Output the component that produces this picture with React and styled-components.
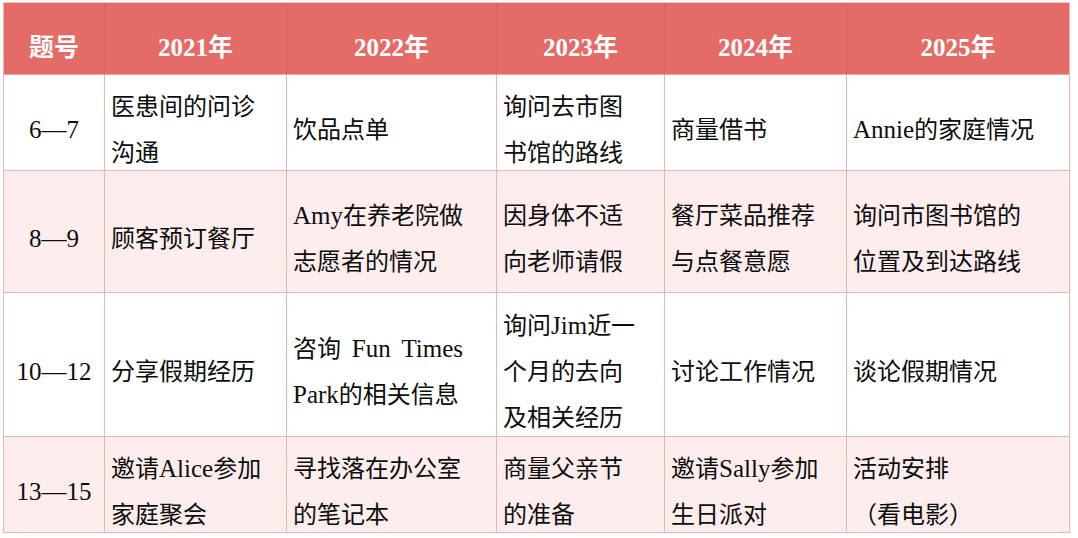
import React from "react";
import styled, { createGlobalStyle } from "styled-components";

const Global = createGlobalStyle`
  html, body { margin: 0; padding: 0; background: #ffffff; }
  body { font-family: "Liberation Serif", "Noto Sans CJK SC", serif; }
`;

const Page = styled.div`
  padding: 2px 0 0 3px;
`;

const Grid = styled.div`
  display: grid;
  grid-template-columns: 101px 182px 210px 168px 182px 223px;
  grid-template-rows: 72px 96px 122px 144px 96px;
  width: max-content;
  border-top: 1px solid #efc4c2;
  border-left: 1px solid #ebb5b5;
`;

const HeadCell = styled.div`
  box-sizing: border-box;
  display: flex;
  align-items: center;
  justify-content: center;
  padding-top: 18px;
  background: #e56b66;
  border-right: 1px solid ${(p) => (p.$last ? "#ebb5b5" : "#d9605b")};
  border-bottom: 1px solid #e8a8a6;
  color: #ffffff;
  font-weight: 700;
  font-size: 25px;
  line-height: 46px;
  white-space: nowrap;
`;

const Cell = styled.div`
  box-sizing: border-box;
  display: flex;
  align-items: center;
  justify-content: ${(p) => (p.$center ? "center" : "flex-start")};
  padding: 15px 0 0 ${(p) => (p.$center ? "0" : "6px")};
  background: ${(p) => (p.$striped ? "#fdeded" : "#ffffff")};
  border-right: 1px solid #ebb5b5;
  border-bottom: 1px solid #ebb5b5;
  color: #0d0d0d;
  font-size: 24px;
  line-height: 46px;
  white-space: nowrap;
`;

const Lines = styled.div`
  display: flex;
  flex-direction: column;
`;

const Line = styled.span`
  display: block;
`;

const SpreadLine = styled.span`
  display: flex;
  justify-content: space-between;
  width: 170px;
`;

const Latin = styled.span`
  font-size: 25px;
`;

const headers = ["题号", "2021年", "2022年", "2023年", "2024年", "2025年"];

const rows = [
  [
    ["6—7"],
    ["医患间的问诊", "沟通"],
    ["饮品点单"],
    ["询问去市图", "书馆的路线"],
    ["商量借书"],
    ["Annie的家庭情况"],
  ],
  [
    ["8—9"],
    ["顾客预订餐厅"],
    ["Amy在养老院做", "志愿者的情况"],
    ["因身体不适", "向老师请假"],
    ["餐厅菜品推荐", "与点餐意愿"],
    ["询问市图书馆的", "位置及到达路线"],
  ],
  [
    ["10—12"],
    ["分享假期经历"],
    [["咨询", "Fun", "Times"], "Park的相关信息"],
    ["询问Jim近一", "个月的去向", "及相关经历"],
    ["讨论工作情况"],
    ["谈论假期情况"],
  ],
  [
    ["13—15"],
    ["邀请Alice参加", "家庭聚会"],
    ["寻找落在办公室", "的笔记本"],
    ["商量父亲节", "的准备"],
    ["邀请Sally参加", "生日派对"],
    ["活动安排", "（看电影）"],
  ],
];

function Runs({ text }) {
  const parts = text.split(/([A-Za-z0-9—]+)/).filter(Boolean);
  return parts.map((p, i) =>
    /^[A-Za-z0-9—]+$/.test(p) ? <Latin key={i}>{p}</Latin> : <React.Fragment key={i}>{p}</React.Fragment>
  );
}

export default function App() {
  return (
    <>
      <Global />
      <Page>
        <Grid>
          {headers.map((h, i) => (
            <HeadCell key={h} $last={i === headers.length - 1}>
              {h}
            </HeadCell>
          ))}
          {rows.map((row, r) =>
            row.map((cell, c) => (
              <Cell key={`${r}-${c}`} $center={c === 0} $striped={r % 2 === 1}>
                <Lines>
                  {cell.map((line, k) =>
                    typeof line === "string" ? (
                      <Line key={k}>
                        <Runs text={line} />
                      </Line>
                    ) : (
                      <SpreadLine key={k}>
                        {line.map((w) => (
                          <span key={w}>
                            <Runs text={w} />
                          </span>
                        ))}
                      </SpreadLine>
                    )
                  )}
                </Lines>
              </Cell>
            ))
          )}
        </Grid>
      </Page>
    </>
  );
}
